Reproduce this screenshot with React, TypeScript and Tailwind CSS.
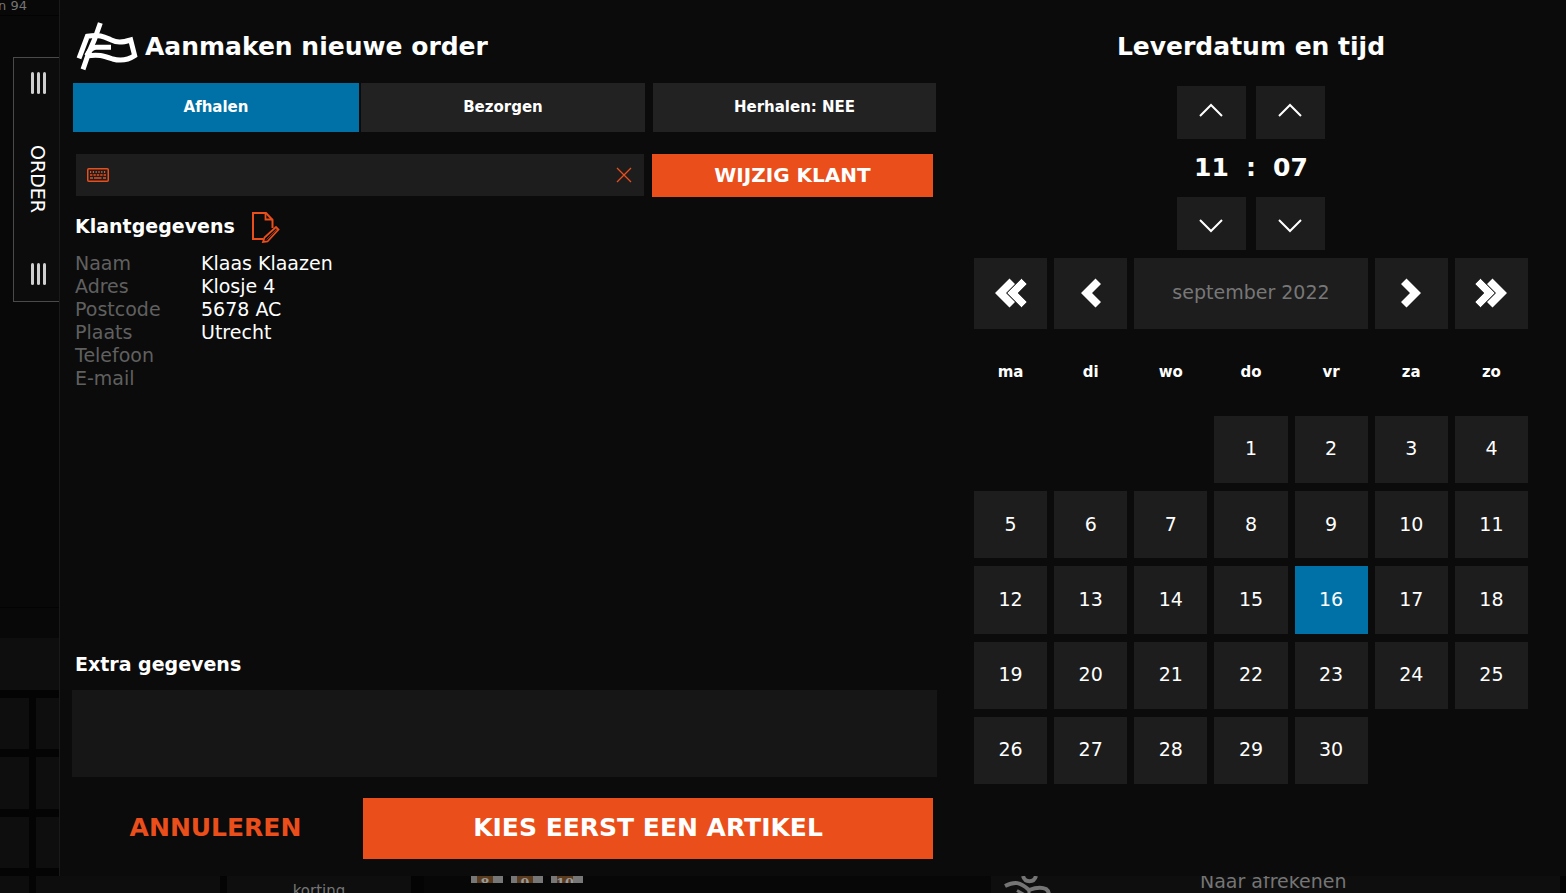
import { useState } from "react";

const WEEKDAYS = ["ma", "di", "wo", "do", "vr", "za", "zo"];
const DAYS = Array.from({ length: 30 }, (_, i) => i + 1);

const CUSTOMER = [
  { label: "Naam", value: "Klaas Klaazen" },
  { label: "Adres", value: "Klosje 4" },
  { label: "Postcode", value: "5678 AC" },
  { label: "Plaats", value: "Utrecht" },
  { label: "Telefoon", value: "" },
  { label: "E-mail", value: "" },
];

function Logo() {
  return (
    <svg width="62" height="50" viewBox="228 67 186 150" fill="none" stroke="#fff" strokeWidth="15" aria-hidden="true">
      <path d="M301 70L284 118L266 160L249 209" />
      <path d="M237 176L262 110C300 104 312 111 332 120C352 129 362 130 392 121L404 168C380 184 360 184 338 178C308 167 296 164 262 168" />
      <path d="M333 143H288C276 143 268 152 260 168" />
    </svg>
  );
}

function KeyboardIcon() {
  return (
    <svg width="22" height="14" viewBox="0 0 22 14" fill="none" stroke="#e94e1b" aria-hidden="true">
      <rect x="0.75" y="0.75" width="20.5" height="12.5" rx="1" strokeWidth="1.5" />
      <path d="M3 4H19" strokeWidth="2" strokeDasharray="1.2 1.6" />
      <path d="M3 7H19" strokeWidth="1.5" strokeDasharray="2.4 1" />
      <path d="M3 10H6M7 10H14.5M16 10H19" strokeWidth="1.4" />
    </svg>
  );
}

function EditIcon() {
  return (
    <svg width="29" height="32" viewBox="0 0 29 32" fill="none" stroke="#e94e1b" strokeWidth="2" aria-hidden="true">
      <path d="M12.5 28H2V2H15L21.5 9V17" />
      <path d="M14.5 2V8.5H21.5" strokeWidth="1.8" />
      <path d="M12 31L13.5 26.5L25 16L27.5 18.5L16.5 30.5L12 31Z" strokeWidth="1.8" />
      <path d="M15.5 28.5L26 18" strokeWidth="0.6" />
    </svg>
  );
}

function Chevron({ down = false }: { down?: boolean }) {
  return (
    <svg width="25" height="14" viewBox="0 0 25 14" fill="none" stroke="#fff" strokeWidth="2" aria-hidden="true">
      <path d={down ? "M1 1L12 12L23 1" : "M1 13L12 2L23 13"} />
    </svg>
  );
}

function Arrow({ double = false, right = false }: { double?: boolean; right?: boolean }) {
  return (
    <svg
      width={double ? 32 : 20}
      height="30"
      viewBox={double ? "0 0 32 30" : "0 0 20 30"}
      className={right ? "rotate-180" : ""}
      fill="#fff"
      aria-hidden="true"
    >
      <path d="M0 15L14.5 0.5L20 6L11 15L20 24L14.5 29.5Z" />
      {double && <path d="M12 15L26.5 0.5L32 6L23 15L32 24L26.5 29.5Z" stroke="#1d1d1d" strokeWidth="0.6" />}
    </svg>
  );
}

function Grip() {
  return (
    <div className="flex gap-[3px]">
      <span className="h-[22px] w-[3px] rounded-sm bg-[#cfcfcf]" />
      <span className="h-[22px] w-[3px] rounded-sm bg-[#cfcfcf]" />
      <span className="h-[22px] w-[3px] rounded-sm bg-[#cfcfcf]" />
    </div>
  );
}

function SideStrip() {
  return (
    <aside className="flex w-[60px] shrink-0 flex-col overflow-hidden border-r border-[#1a1a1a] bg-[#080808]">
      <p className="flex h-4 justify-end whitespace-nowrap border-b border-[#030303] pr-8 text-[13px] leading-3 text-[#757575]">
        n 94
      </p>
      <button className="ml-[13px] mt-[41px] flex h-[245px] shrink-0 flex-col items-center justify-between border border-r-0 border-[#4a4a4a] bg-[#0c0c0c] pb-4 pl-1 pt-3.5 text-white">
        <Grip />
        <span className="pr-0.5 text-[19px] leading-6 [writing-mode:vertical-rl]">ORDER</span>
        <Grip />
      </button>
      <div className="flex-1" />
      <div className="mb-1 h-[27px] border-t border-[#030303]" />
      <div className="h-[52px] bg-[#0e0e0e]" />
      <div className="grid h-[186px] grid-cols-[29px_1fr] gap-x-[7px] gap-y-2 bg-[#040404] pb-2 pt-2">
        {[0, 1, 2, 3, 4, 5].map((i) => (
          <span key={i} className="bg-[#0e0e0e]" />
        ))}
      </div>
    </aside>
  );
}

function BottomStrip() {
  return (
    <footer className="flex h-[17px] shrink-0 overflow-hidden bg-[#040404] text-[#757575]">
      <div className="w-[29px] bg-[#0d0d0d]" />
      <div className="ml-[7px] w-[184px] bg-[#0d0d0d]" />
      <div className="ml-[7px] w-[184px] bg-[#0e0e0e] pt-[5px] text-center text-[15px] leading-5">korting</div>
      <div className="ml-[13px] flex flex-1 gap-2 bg-[#070707] pl-[47px]">
        {[8, 9, 10].map((n) => (
          <span
            key={n}
            className="flex h-[7px] w-8 justify-center overflow-hidden border-l-[6px] border-r-[10px] border-[#777] bg-[#5c3c1e] font-['DejaVu_Serif',serif] text-[13px] font-bold leading-[15px] text-[#999]"
          >
            {n}
          </span>
        ))}
      </div>
      <div className="mr-1.5 flex w-[569px] items-end bg-[#0e0e0e] pl-3">
        <svg width="50" height="17" viewBox="0 0 50 17" fill="none" stroke="#757575" strokeWidth="4" aria-hidden="true">
          <path d="M2 10C12 5 17 6 26 14C34 11 39 11 43 13C46 15 46 17 46 20" />
          <path d="M20 0C22 7 31 7 33 0" />
          <path d="M14 14.5L22 19M26 13V20" strokeWidth="3" />
        </svg>
        <span className="ml-[147px] whitespace-nowrap text-[19px] leading-6">Naar afrekenen</span>
      </div>
    </footer>
  );
}

function OrderForm() {
  const [mode, setMode] = useState("Afhalen");
  const [repeat, setRepeat] = useState(false);
  const [query, setQuery] = useState("");
  const [extra, setExtra] = useState("");

  return (
    <section className="flex flex-col">
      <header className="flex h-[83px] items-center gap-[7px] pb-2.5 pl-1 pt-5">
        <Logo />
        <h1 className="whitespace-nowrap text-[25px] font-bold">Aanmaken nieuwe order</h1>
      </header>

      <div className="grid h-[49px] grid-cols-[286fr_286fr_291fr] px-px text-[15px] font-bold">
        {["Afhalen", "Bezorgen"].map((m) => (
          <button
            key={m}
            onClick={() => setMode(m)}
            className={m === mode ? "bg-[#0071a6]" : "ml-0.5 bg-[#222222]"}
          >
            {m}
          </button>
        ))}
        <button onClick={() => setRepeat(!repeat)} className="ml-2 bg-[#222222]">
          Herhalen: {repeat ? "JA" : "NEE"}
        </button>
      </div>

      <div className="mt-[22px] grid h-[43px] grid-cols-[568fr_281fr] gap-2 pl-1 pr-1">
        <div className="mb-px flex items-center bg-[#1d1d1d] px-[11px]">
          <KeyboardIcon />
          <input
            aria-label="Zoek klant"
            value={query}
            onChange={(e) => setQuery(e.target.value)}
            className="min-w-0 flex-1 bg-transparent px-3 text-[19px] outline-none"
          />
          <button aria-label="Wissen" onClick={() => setQuery("")}>
            <svg width="18" height="16" viewBox="0 0 18 16" stroke="#e94e1b" strokeWidth="1.3" aria-hidden="true">
              <path d="M2 1L16 15M16 1L2 15" />
            </svg>
          </button>
        </div>
        <button className="bg-[#e94e1b] pb-0.5 text-[20px] font-bold">WIJZIG KLANT</button>
      </div>

      <div className="mt-3 flex h-9 items-center gap-4 pl-[3px]">
        <h2 className="pb-0.5 text-[19px] font-bold">Klantgegevens</h2>
        <button aria-label="Klant bewerken">
          <EditIcon />
        </button>
      </div>
      <dl className="mt-[7px] pl-[3px] text-[19px] leading-[23px]">
        {CUSTOMER.map((row) => (
          <div key={row.label} className="flex">
            <dt className="w-[126px] text-[#606060]">{row.label}</dt>
            <dd>{row.value}</dd>
          </div>
        ))}
      </dl>

      <label htmlFor="extra" className="mt-auto pl-[3px] text-[19px] font-bold leading-6">
        Extra gegevens
      </label>
      <textarea
        id="extra"
        value={extra}
        onChange={(e) => setExtra(e.target.value)}
        className="mt-3.5 h-[87px] resize-none bg-[#161616] p-3 text-[19px] outline-none"
      />
      <div className="mb-[17px] mt-[21px] grid h-[61px] grid-cols-[287fr_570fr] gap-1 pr-1 text-[25px] font-bold">
        <button className="pb-0.5 text-[#e94e1b]">ANNULEREN</button>
        <button className="bg-[#e94e1b] pb-0.5">KIES EERST EEN ARTIKEL</button>
      </div>
    </section>
  );
}

function DeliveryPicker() {
  const [hour, setHour] = useState(11);
  const [minute, setMinute] = useState(7);
  const [day, setDay] = useState(16);

  const stepHour = (n: number) => setHour((hour + n + 24) % 24);
  const stepMinute = (n: number) => setMinute((minute + n + 60) % 60);
  const pad = (n: number) => String(n).padStart(2, "0");

  return (
    <section>
      <h2 className="flex h-[86px] items-center justify-center pb-2.5 pt-[18px] text-[25px] font-bold">
        Leverdatum en tijd
      </h2>

      <div className="grid grid-cols-[69px_10px_69px] grid-rows-[53px_58px_53px] justify-center">
        <button aria-label="Uur later" onClick={() => stepHour(1)} className="flex items-center justify-center bg-[#1d1d1d] pb-1.5">
          <Chevron />
        </button>
        <span />
        <button aria-label="Minuut later" onClick={() => stepMinute(1)} className="flex items-center justify-center bg-[#1d1d1d] pb-1.5">
          <Chevron />
        </button>
        <span className="flex items-center justify-center text-[25px] font-bold">{pad(hour)}</span>
        <span className="flex items-center justify-center text-[25px] font-bold">:</span>
        <span className="flex items-center justify-center text-[25px] font-bold">{pad(minute)}</span>
        <button aria-label="Uur eerder" onClick={() => stepHour(-1)} className="flex items-center justify-center bg-[#1d1d1d] pt-1">
          <Chevron down />
        </button>
        <span />
        <button aria-label="Minuut eerder" onClick={() => stepMinute(-1)} className="flex items-center justify-center bg-[#1d1d1d] pt-1">
          <Chevron down />
        </button>
      </div>

      <div className="mt-2 grid h-[71px] grid-cols-7 gap-[7px]">
        <button aria-label="Vorig jaar" className="flex items-center justify-center bg-[#1d1d1d] pb-0.5">
          <Arrow double />
        </button>
        <button aria-label="Vorige maand" className="flex items-center justify-center bg-[#1d1d1d] pb-0.5">
          <Arrow />
        </button>
        <div className="col-span-3 flex items-center justify-center bg-[#1d1d1d] pb-0.5 text-[19px] text-[#777777]">
          september 2022
        </div>
        <button aria-label="Volgende maand" className="flex items-center justify-center bg-[#1d1d1d] pb-0.5">
          <Arrow right />
        </button>
        <button aria-label="Volgend jaar" className="flex items-center justify-center bg-[#1d1d1d] pb-0.5">
          <Arrow double right />
        </button>
      </div>

      <div className="grid h-[87px] grid-cols-7 items-center gap-[7px] text-center text-[15px] font-bold">
        {WEEKDAYS.map((d) => (
          <span key={d}>{d}</span>
        ))}
      </div>

      <div className="grid h-[368px] grid-cols-7 grid-rows-5 gap-x-[7px] gap-y-2 text-[19px]">
        {DAYS.map((d) => (
          <button
            key={d}
            onClick={() => setDay(d)}
            className={`pb-0.5 ${d === 1 ? "col-start-4" : ""} ${d === day ? "bg-[#0071a6]" : "bg-[#1d1d1d]"}`}
          >
            {d}
          </button>
        ))}
      </div>
    </section>
  );
}

export default function App() {
  return (
    <div className="flex min-h-screen flex-col bg-[#0b0b0b] font-['DejaVu_Sans',sans-serif] text-white">
      <div className="flex flex-1">
        <SideStrip />
        <main className="grid flex-1 grid-cols-[865fr_554fr] gap-[37px] pl-3 pr-[38px]">
          <OrderForm />
          <DeliveryPicker />
        </main>
      </div>
      <BottomStrip />
    </div>
  );
}
